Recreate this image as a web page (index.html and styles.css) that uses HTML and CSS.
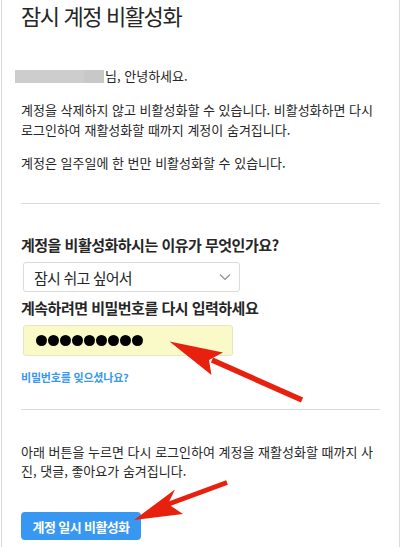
FILE: index.html
```html
<!DOCTYPE html>
<html lang="ko">
<head>
    <title>잠시 계정 비활성화</title>
    <meta charset="UTF-8">
    <meta name="viewport" content="width=device-width, initial-scale=1.0">
    <link rel="stylesheet" href="styles.css">
</head>
<body>
    <div class="page">
        <h1 class="title">잠시 계정 비활성화</h1>

        <p class="greeting"><span class="blurred-name"></span>님, 안녕하세요.</p>

        <p class="text first">계정을 삭제하지 않고 비활성화할 수 있습니다. 비활성화하면 다시 로그인하여 재활성화할 때까지 계정이 숨겨집니다.</p>
        <p class="text second">계정은 일주일에 한 번만 비활성화할 수 있습니다.</p>

        <div class="divider"></div>

        <h2 class="label reason-label">계정을 비활성화하시는 이유가 무엇인가요?</h2>
        <div class="select">
            <span>잠시 쉬고 싶어서</span>
            <svg class="chevron" width="12" height="8" viewBox="0 0 12 8">
                <path d="M1 1.5 L6 6.5 L11 1.5" fill="none" stroke="#8e8e8e" stroke-width="1.2"/>
            </svg>
        </div>

        <h2 class="label password-label">계속하려면 비밀번호를 다시 입력하세요</h2>
        <div class="password">
            <span class="dot"></span><span class="dot"></span><span class="dot"></span>
            <span class="dot"></span><span class="dot"></span><span class="dot"></span>
            <span class="dot"></span><span class="dot"></span><span class="dot"></span>
        </div>

        <a class="forgot" href="#">비밀번호를 잊으셨나요?</a>

        <div class="divider lower"></div>

        <p class="text notice">아래 버튼을 누르면 다시 로그인하여 계정을 재활성화할 때까지 사진, 댓글, 좋아요가 숨겨집니다.</p>

        <button class="disable-btn">계정 일시 비활성화</button>

        <!-- red arrows drawn on top of the screenshot -->
        <svg class="arrows" width="400" height="547" viewBox="0 0 400 547">
            <line x1="212" y1="360" x2="302" y2="400" stroke="#e8200e" stroke-width="5.5"/>
            <polygon points="169.5,341.5 223,352.5 209,360 211.5,375" fill="#e8200e"/>
            <line x1="166" y1="505" x2="227" y2="482.5" stroke="#e8200e" stroke-width="5"/>
            <polygon points="134,520 175,489.5 168,504 183,514" fill="#e8200e"/>
        </svg>
    </div>
</body>
</html>
```

FILE: styles.css
```css
body {
    margin: 0;
    padding: 0;
    background-color: #ffffff;
    font-family: "Noto Sans CJK KR", "Noto Sans", sans-serif;
    color: #262626;
}

.page {
    position: relative;
    box-sizing: border-box;
    min-height: 547px;
    margin-left: 1px;
    width: 399px;
    padding: 0 19px;
    border-left: 1px solid #dbdbdb;
    border-right: 1px solid #dbdbdb;
}

.title {
    margin: 0;
    font-size: 22px;
    font-weight: 400;
    line-height: 30px;
    letter-spacing: -1.4px;
    color: #262626;
}

.greeting {
    margin: 36px 0 0 0;
    font-size: 13px;
    line-height: 20px;
}

.blurred-name {
    display: inline-block;
    width: 89px;
    height: 13px;
    vertical-align: -2px;
    margin-left: -6px;
    margin-right: 1px;
    background: linear-gradient(to right, #cdcdcd 0, #cdcdcd 77%, #c8c8c8 77%, #c8c8c8 100%);
}

.text {
    margin: 0;
    font-size: 13px;
    line-height: 20px;
}

.text.first {
    margin-top: 14px;
}

.text.second {
    margin-top: 13px;
}

.divider {
    height: 1px;
    margin-top: 30px;
    background-color: #dbdbdb;
}

.label {
    margin: 0;
    font-size: 15px;
    font-weight: 600;
    line-height: 22px;
    letter-spacing: -0.5px;
}

.reason-label {
    margin-top: 30px;
}

.select {
    display: flex;
    align-items: center;
    justify-content: space-between;
    box-sizing: border-box;
    width: 217px;
    height: 30px;
    margin: 6px 0 0 2px;
    padding: 0 8px 0 10px;
    border: 1px solid #dbdbdb;
    border-radius: 3px;
    font-size: 15px;
    letter-spacing: -0.8px;
}

.password-label {
    margin-top: 5px;
}

.password {
    display: flex;
    align-items: center;
    gap: 1px;
    box-sizing: border-box;
    width: 210px;
    height: 31px;
    margin: 6px 0 0 2px;
    padding: 0 12px;
    background-color: #fafac8;
    border: 1px solid #e6e6c0;
    border-radius: 3px;
}

.dot {
    width: 11px;
    height: 11px;
    border-radius: 50%;
    background-color: #000000;
}

.forgot {
    display: block;
    margin-top: 13px;
    font-size: 11px;
    font-weight: 600;
    line-height: 16px;
    letter-spacing: -0.2px;
    color: #3897f0;
    text-decoration: none;
}

.divider.lower {
    margin-top: 24px;
}

.text.notice {
    margin-top: 32px;
    line-height: 19px;
}

.disable-btn {
    display: block;
    width: 120px;
    height: 28px;
    margin-top: 32px;
    padding: 0;
    border: none;
    border-radius: 4px;
    background-color: #3897f0;
    color: #ffffff;
    font-family: "Noto Sans CJK KR", "Noto Sans", sans-serif;
    font-size: 13px;
    font-weight: 600;
    letter-spacing: -0.6px;
    cursor: pointer;
}

.arrows {
    position: absolute;
    top: 0;
    left: -2px;
    pointer-events: none;
}
```
